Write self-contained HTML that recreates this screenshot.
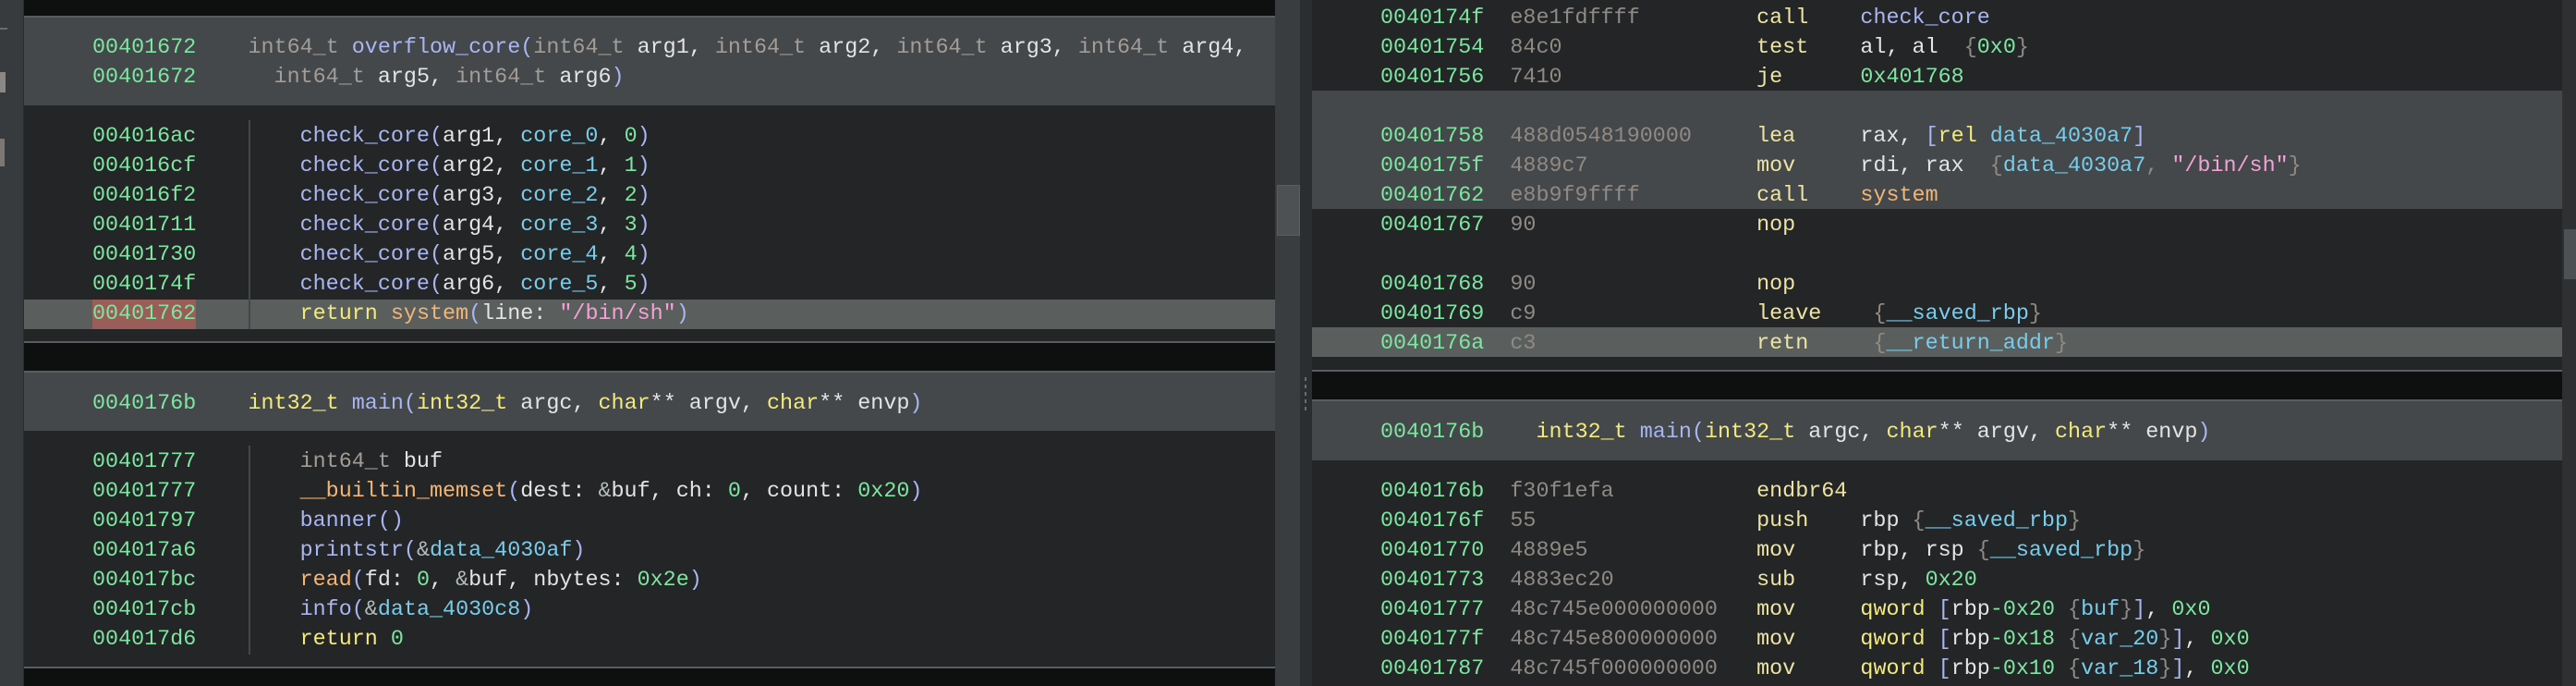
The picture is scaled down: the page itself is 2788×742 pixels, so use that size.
<!DOCTYPE html>
<html><head><meta charset="utf-8"><style>
*{margin:0;padding:0}
body{width:2788px;height:742px;background:#232527;position:relative;overflow:hidden;font-family:"Liberation Mono",monospace;font-size:23.4px}
.r{position:absolute}
.l{position:absolute;white-space:pre;height:32px;line-height:32px;color:#e4e4e4}
.a{color:#7ee6a0}.b{color:#8f8a84}.m{color:#ede3a3}.f{color:#a9b6f2}.t{color:#a29d96}.y{color:#f3ea7c}.c{color:#79cdeb}.n{color:#7ee6a0}.s{color:#f2a2d4}.o{color:#f2b575}.p{color:#a9b6f2}.g{color:#8f8a84}.am{color:#b4bcbc}
</style></head><body>
<!-- sidebar -->
<div class="r" style="left:0;top:0;width:25px;height:742px;background:#383b3d;border-right:1px solid #2a2c2e"></div>
<div class="r" style="left:0;top:30px;width:8px;height:2px;background:#6a6d6f"></div>
<div class="r" style="left:0;top:78px;width:6px;height:22px;background:#8a8784"></div>
<div class="r" style="left:0;top:150px;width:5px;height:30px;background:#7a7774"></div>
<!-- left pane bands -->
<div class="r" style="left:26px;top:0;width:1354px;height:17px;background:#0e100f"></div>
<div class="r" style="left:26px;top:17px;width:1354px;height:2px;background:#5a5d5f"></div>
<div class="r" style="left:26px;top:19px;width:1354px;height:95px;background:#45484a"></div>
<div class="r" style="left:26px;top:324px;width:1354px;height:32px;background:#5a5f5e"></div>
<div class="r" style="left:100px;top:324px;width:112px;height:32px;background:#9b5d58"></div>
<div class="r" style="left:269px;top:130px;width:2px;height:226px;background:#45484a"></div>
<div class="r" style="left:26px;top:369px;width:1354px;height:2px;background:#5a5d5f"></div>
<div class="r" style="left:26px;top:371px;width:1354px;height:30px;background:#0e100f"></div>
<div class="r" style="left:26px;top:401px;width:1354px;height:2px;background:#5a5d5f"></div>
<div class="r" style="left:26px;top:403px;width:1354px;height:63px;background:#45484a"></div>
<div class="r" style="left:269px;top:482px;width:2px;height:226px;background:#45484a"></div>
<div class="r" style="left:26px;top:721px;width:1354px;height:2px;background:#5a5d5f"></div>
<div class="r" style="left:26px;top:723px;width:1354px;height:19px;background:#0e100f"></div>
<!-- middle scrollbar -->
<div class="r" style="left:1380px;top:0;width:27px;height:742px;background:#3a3d3f"></div>
<div class="r" style="left:1382px;top:200px;width:23px;height:53px;background:#4d5153;border:1px solid #5a5e60"></div>
<div class="r" style="left:1407px;top:0;width:13px;height:742px;background:#2b2d2f"></div>
<div class="r" style="left:1412px;top:408px;width:2px;height:36px;background:repeating-linear-gradient(#6a6d6f 0 4px,transparent 4px 8px)"></div>
<!-- right pane -->
<div class="r" style="left:1420px;top:98px;width:1353px;height:128px;background:#45484a"></div>
<div class="r" style="left:1420px;top:354px;width:1353px;height:32px;background:#5a5f5e"></div>
<div class="r" style="left:1420px;top:400px;width:1353px;height:2px;background:#5a5d5f"></div>
<div class="r" style="left:1420px;top:402px;width:1353px;height:30px;background:#0e100f"></div>
<div class="r" style="left:1420px;top:432px;width:1353px;height:2px;background:#5a5d5f"></div>
<div class="r" style="left:1420px;top:434px;width:1353px;height:64px;background:#45484a"></div>
<div class="r" style="left:2773px;top:0;width:15px;height:742px;background:#2e3032"></div>
<div class="r" style="left:2775px;top:248px;width:13px;height:54px;background:#4d5153"></div>

<!-- left text -->
<div class="l" style="left:100px;top:36px"><span class="a">00401672</span>    <span class="t">int64_t</span> <span class="f">overflow_core</span><span class="p">(</span><span class="t">int64_t</span> arg1, <span class="t">int64_t</span> arg2, <span class="t">int64_t</span> arg3, <span class="t">int64_t</span> arg4,</div>
<div class="l" style="left:100px;top:68px"><span class="a">00401672</span>      <span class="t">int64_t</span> arg5, <span class="t">int64_t</span> arg6<span class="p">)</span></div>
<div class="l" style="left:100px;top:132px"><span class="a">004016ac</span>        <span class="f">check_core</span><span class="p">(</span>arg1, <span class="c">core_0</span>, <span class="n">0</span><span class="p">)</span></div>
<div class="l" style="left:100px;top:164px"><span class="a">004016cf</span>        <span class="f">check_core</span><span class="p">(</span>arg2, <span class="c">core_1</span>, <span class="n">1</span><span class="p">)</span></div>
<div class="l" style="left:100px;top:196px"><span class="a">004016f2</span>        <span class="f">check_core</span><span class="p">(</span>arg3, <span class="c">core_2</span>, <span class="n">2</span><span class="p">)</span></div>
<div class="l" style="left:100px;top:228px"><span class="a">00401711</span>        <span class="f">check_core</span><span class="p">(</span>arg4, <span class="c">core_3</span>, <span class="n">3</span><span class="p">)</span></div>
<div class="l" style="left:100px;top:260px"><span class="a">00401730</span>        <span class="f">check_core</span><span class="p">(</span>arg5, <span class="c">core_4</span>, <span class="n">4</span><span class="p">)</span></div>
<div class="l" style="left:100px;top:292px"><span class="a">0040174f</span>        <span class="f">check_core</span><span class="p">(</span>arg6, <span class="c">core_5</span>, <span class="n">5</span><span class="p">)</span></div>
<div class="l" style="left:100px;top:324px"><span class="a">00401762</span>        <span class="y">return</span> <span class="o">system</span><span class="p">(</span>line: <span class="s">"/bin/sh"</span><span class="p">)</span></div>

<div class="l" style="left:100px;top:421px"><span class="a">0040176b</span>    <span class="y">int32_t</span> <span class="f">main</span><span class="p">(</span><span class="y">int32_t</span> argc, <span class="y">char</span>** argv, <span class="y">char</span>** envp<span class="p">)</span></div>
<div class="l" style="left:100px;top:484px"><span class="a">00401777</span>        <span class="t">int64_t</span> buf</div>
<div class="l" style="left:100px;top:516px"><span class="a">00401777</span>        <span class="o">__builtin_memset</span><span class="p">(</span>dest: <span class="am">&amp;</span>buf, ch: <span class="n">0</span>, count: <span class="n">0x20</span><span class="p">)</span></div>
<div class="l" style="left:100px;top:548px"><span class="a">00401797</span>        <span class="f">banner</span><span class="p">()</span></div>
<div class="l" style="left:100px;top:580px"><span class="a">004017a6</span>        <span class="f">printstr</span><span class="p">(</span><span class="am">&amp;</span><span class="c">data_4030af</span><span class="p">)</span></div>
<div class="l" style="left:100px;top:612px"><span class="a">004017bc</span>        <span class="o">read</span><span class="p">(</span>fd: <span class="n">0</span>, <span class="am">&amp;</span>buf, nbytes: <span class="n">0x2e</span><span class="p">)</span></div>
<div class="l" style="left:100px;top:644px"><span class="a">004017cb</span>        <span class="f">info</span><span class="p">(</span><span class="am">&amp;</span><span class="c">data_4030c8</span><span class="p">)</span></div>
<div class="l" style="left:100px;top:676px"><span class="a">004017d6</span>        <span class="y">return</span> <span class="n">0</span></div>

<!-- right text -->
<div class="l" style="left:1494px;top:4px"><span class="a">0040174f</span>  <span class="b">e8e1fdffff</span>         <span class="m">call</span>    <span class="f">check_core</span></div>
<div class="l" style="left:1494px;top:36px"><span class="a">00401754</span>  <span class="b">84c0</span>               <span class="m">test</span>    al, al  <span class="g">{</span><span class="n">0x0</span><span class="g">}</span></div>
<div class="l" style="left:1494px;top:68px"><span class="a">00401756</span>  <span class="b">7410</span>               <span class="m">je</span>      <span class="n">0x401768</span></div>
<div class="l" style="left:1494px;top:132px"><span class="a">00401758</span>  <span class="b">488d0548190000</span>     <span class="m">lea</span>     rax, <span class="p">[</span><span class="y">rel</span> <span class="c">data_4030a7</span><span class="p">]</span></div>
<div class="l" style="left:1494px;top:164px"><span class="a">0040175f</span>  <span class="b">4889c7</span>             <span class="m">mov</span>     rdi, rax  <span class="g">{</span><span class="c">data_4030a7</span><span class="g">,</span> <span class="s">"/bin/sh"</span><span class="g">}</span></div>
<div class="l" style="left:1494px;top:196px"><span class="a">00401762</span>  <span class="b">e8b9f9ffff</span>         <span class="m">call</span>    <span class="o">system</span></div>
<div class="l" style="left:1494px;top:228px"><span class="a">00401767</span>  <span class="b">90</span>                 <span class="m">nop</span></div>
<div class="l" style="left:1494px;top:292px"><span class="a">00401768</span>  <span class="b">90</span>                 <span class="m">nop</span></div>
<div class="l" style="left:1494px;top:324px"><span class="a">00401769</span>  <span class="b">c9</span>                 <span class="m">leave</span>    <span class="g">{</span><span class="c">__saved_rbp</span><span class="g">}</span></div>
<div class="l" style="left:1494px;top:356px"><span class="a">0040176a</span>  <span class="b">c3</span>                 <span class="m">retn</span>     <span class="g">{</span><span class="c">__return_addr</span><span class="g">}</span></div>

<div class="l" style="left:1494px;top:452px"><span class="a">0040176b</span>    <span class="y">int32_t</span> <span class="f">main</span><span class="p">(</span><span class="y">int32_t</span> argc, <span class="y">char</span>** argv, <span class="y">char</span>** envp<span class="p">)</span></div>
<div class="l" style="left:1494px;top:516px"><span class="a">0040176b</span>  <span class="b">f30f1efa</span>           <span class="m">endbr64</span></div>
<div class="l" style="left:1494px;top:548px"><span class="a">0040176f</span>  <span class="b">55</span>                 <span class="m">push</span>    rbp <span class="g">{</span><span class="c">__saved_rbp</span><span class="g">}</span></div>
<div class="l" style="left:1494px;top:580px"><span class="a">00401770</span>  <span class="b">4889e5</span>             <span class="m">mov</span>     rbp, rsp <span class="g">{</span><span class="c">__saved_rbp</span><span class="g">}</span></div>
<div class="l" style="left:1494px;top:612px"><span class="a">00401773</span>  <span class="b">4883ec20</span>           <span class="m">sub</span>     rsp, <span class="n">0x20</span></div>
<div class="l" style="left:1494px;top:644px"><span class="a">00401777</span>  <span class="b">48c745e000000000</span>   <span class="m">mov</span>     <span class="y">qword</span> <span class="p">[</span>rbp<span class="n">-0x20</span> <span class="g">{</span><span class="c">buf</span><span class="g">}</span><span class="p">]</span>, <span class="n">0x0</span></div>
<div class="l" style="left:1494px;top:676px"><span class="a">0040177f</span>  <span class="b">48c745e800000000</span>   <span class="m">mov</span>     <span class="y">qword</span> <span class="p">[</span>rbp<span class="n">-0x18</span> <span class="g">{</span><span class="c">var_20</span><span class="g">}</span><span class="p">]</span>, <span class="n">0x0</span></div>
<div class="l" style="left:1494px;top:708px"><span class="a">00401787</span>  <span class="b">48c745f000000000</span>   <span class="m">mov</span>     <span class="y">qword</span> <span class="p">[</span>rbp<span class="n">-0x10</span> <span class="g">{</span><span class="c">var_18</span><span class="g">}</span><span class="p">]</span>, <span class="n">0x0</span></div>
</body></html>
